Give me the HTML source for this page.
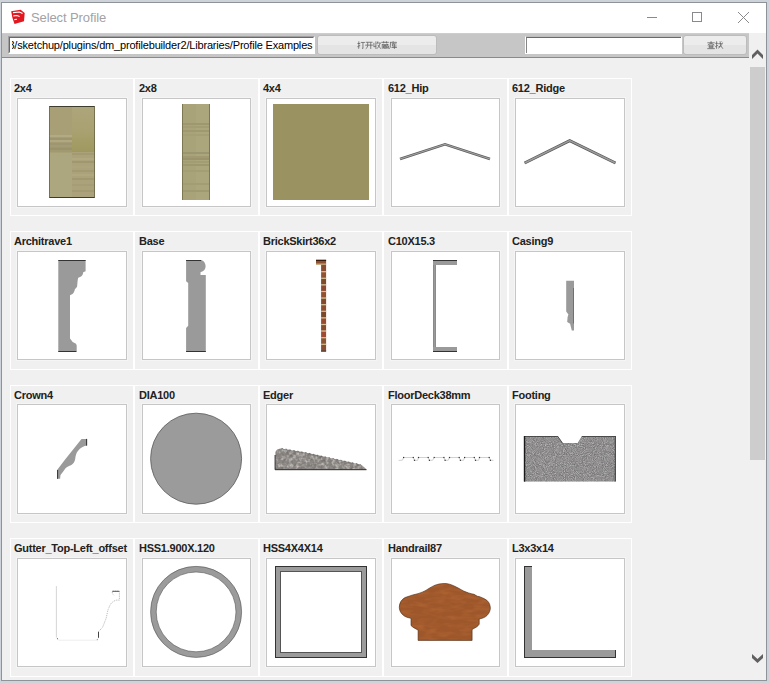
<!DOCTYPE html>
<html><head><meta charset="utf-8">
<style>
*{margin:0;padding:0;box-sizing:border-box}
html,body{width:769px;height:683px;overflow:hidden;background:#cdd3d8;font-family:"Liberation Sans",sans-serif}
.a{position:absolute}
#win{position:absolute;left:1px;top:2px;width:766px;height:679px;background:#f0f0f0;border:1px solid #8e9399}
#title{position:absolute;left:2px;top:3px;width:764px;height:30px;background:#fff}
#ttxt{position:absolute;left:31px;top:9.5px;font-size:13px;color:#a2a2a6;letter-spacing:-0.1px}
#tb{position:absolute;left:2px;top:33px;width:747px;height:25px;background:#c6c6c6;border-bottom:1px solid #8a8a8a;border-top:1px solid #cdcdcd}
#path{position:absolute;left:8px;top:36px;width:307px;height:18px;background:#fff;border-top:1px solid #a0a0a0;border-left:1px solid #a0a0a0;border-right:1px solid #fff;border-bottom:1px solid #fff;overflow:hidden}
#path .in{position:absolute;left:0;top:0;right:0;bottom:0;border-top:1px solid #696969;border-left:1px solid #696969;border-right:1px solid #fff;border-bottom:1px solid #fff}
#path .clip{position:absolute;left:3px;top:1px;width:302px;height:15px;overflow:hidden}
#path span{position:absolute;left:-3.6px;top:1px;font-size:11px;color:#000;letter-spacing:-0.18px;white-space:nowrap}
.btn{position:absolute;height:20px;border:1px solid #bcbcbc;border-radius:3px;background:linear-gradient(#ececec 0,#ececec 50%,#e4e4e4 50%,#e4e4e4 100%)}
#search{position:absolute;left:525px;top:36px;width:157px;height:18px;background:#fff;border-top:1px solid #bfbfbf;border-left:1px solid #fff;border-right:1px solid #fff;border-bottom:1px solid #fff}
#search .in{position:absolute;left:0;top:0;right:0;bottom:0;border-top:1px solid #6a6a6a;border-left:1px solid #858585}
#sb{position:absolute;left:749px;top:33px;width:17px;height:647px;background:#f0f0f0}
#thumb{position:absolute;left:750px;top:67px;width:15px;height:393px;background:#cdcdcd}
.card{position:absolute;width:124px;height:138px;border:1px solid #fff;background:#f0f0f0}
.lbl{position:absolute;font-size:11px;font-weight:bold;color:#222;letter-spacing:-0.25px;white-space:nowrap}
.box{position:absolute;width:110px;height:109px;background:#fff;border:1px solid #c6c6c6;box-shadow:0 0 0 1px #f5f5f5}
.box svg{position:absolute;left:-1px;top:-1px}
</style></head><body>
<div id="win"></div>
<div id="title"></div>
<svg class="a" style="left:10px;top:8px" width="17" height="17" viewBox="10 8 17 17"><path d="M11.2 11.3L20.6 9.8L24.7 13L24 21.3L14.5 23.9L12.4 17.7Z" fill="#e2171f"/><path d="M13 12.6L19.5 12L22.6 13.6M13.4 15.9L17 15.5L19.6 16.4M14.3 19.6L17 19.3" fill="none" stroke="#fff" stroke-width="1.1"/></svg>
<div id="ttxt">Select Profile</div>
<svg class="a" style="left:647px;top:17px" width="10" height="1"><rect x="0" y="0" width="10" height="1" fill="#8a8a8a"/></svg>
<svg class="a" style="left:692px;top:12px" width="10" height="10"><rect x="0.5" y="0.5" width="9" height="9" fill="none" stroke="#8a8a8a" stroke-width="1"/></svg>
<svg class="a" style="left:738px;top:12px" width="11" height="11" shape-rendering="crispEdges"><path d="M0 0L11 11M11 0L0 11" stroke="#8a8a8a" stroke-width="1"/></svg>
<div id="tb"></div>
<div id="path"><div class="in"></div><div class="clip"><span>3/sketchup/plugins/dm_profilebuilder2/Libraries/Profile Examples</span></div></div>
<div class="btn" style="left:317px;top:35px;width:120px"></div>
<svg class="a" style="left:357px;top:41px" width="42" height="10"><path transform="translate(0.0 0) scale(0.9)" d="M0.5 2.8H3.6M2 0.4V8.2L1.2 7.6M0.4 6.4L3.6 4.8M4.2 1.6H8.8M6.6 1.6V8.4L5.6 7.8" fill="none" stroke="#5e5e5e" stroke-width="0.85" /><path transform="translate(8.0 0) scale(0.9)" d="M0.8 1.4H8.4M0.2 4.6H8.8M3 1.4V5Q3 7.6 0.8 8.6M6.4 1.4V8.8" fill="none" stroke="#5e5e5e" stroke-width="0.85" /><path transform="translate(16.0 0) scale(0.9)" d="M1 2V6.6L3.4 5.6M3.2 0.4V8.8M5.4 0.4L4.4 3.2M5 2.2H8.6M8 2.2Q7.2 6.2 4.4 8.6M5.4 4.2Q6.8 7.2 9 8.6" fill="none" stroke="#5e5e5e" stroke-width="0.85" /><path transform="translate(24.0 0) scale(0.9)" d="M0.3 1.5H8.7M3 0.2V2.6M6 0.2V2.6M1.4 3.2V8.6M1.4 4H8.4M2.8 5H6V8H2.8ZM4.4 5V8M2.8 6.5H6M6.8 3L8.6 8.6M8.6 5.2L6.6 8.6" fill="none" stroke="#5e5e5e" stroke-width="0.85" /><path transform="translate(32.0 0) scale(0.9)" d="M4.6 0.2V1.4M1 1.5H8.8M1.6 1.5V5Q1.6 7.6 0.3 8.6M3 3.2H8.4M4.8 2.2L3.6 5.6H8.4M2.8 7.2H8.8M6 3.2V8.8" fill="none" stroke="#5e5e5e" stroke-width="0.85" /></svg>
<div id="search"><div class="in"></div></div>
<div class="btn" style="left:683px;top:35px;width:64px"></div>
<svg class="a" style="left:707px;top:41px" width="18" height="10"><path transform="translate(0.0 0) scale(0.9)" d="M0.4 2H8.6M4.5 0.2V3.6M4.2 2.4L0.8 4.6M4.8 2.4L8.2 4.6M2.4 4.6H6.6V7.4H2.4ZM2.4 6H6.6M0.3 8.5H8.7" fill="none" stroke="#5e5e5e" stroke-width="0.85" /><path transform="translate(8.0 0) scale(0.9)" d="M0.3 2.6H3.2M1.8 0.3V8.2L1 7.6M0.3 6.2L3.2 4.8M3.6 3H8.8M5.6 0.3Q5.8 6.4 8.8 8.6M7.4 3.8L4 8.2M7.4 0.6L8.4 1.6M3.8 6.6L6.2 5.6" fill="none" stroke="#5e5e5e" stroke-width="0.85" /></svg>
<div id="sb"></div>
<div id="thumb"></div>
<svg class="a" style="left:0;top:0" width="769" height="683"><path d="M752 55L757.5 49.6L763 55L763 59L757.5 53.6L752 59Z" fill="#606060"/><path d="M752 654L757.5 659L763 654L763 658L757.5 663L752 658Z" fill="#606060"/></svg>

<div class="card" style="left:10px;top:78px;width:124px;height:138px"></div>
<div class="lbl" style="left:14px;top:82px">2x4</div>
<div class="box" style="left:17px;top:98px;width:110px;height:109px"></div>
<div class="card" style="left:134px;top:78px;width:125px;height:138px"></div>
<div class="lbl" style="left:139px;top:82px">2x8</div>
<div class="box" style="left:142px;top:98px;width:109px;height:109px"></div>
<div class="card" style="left:259px;top:78px;width:124px;height:138px"></div>
<div class="lbl" style="left:263px;top:82px">4x4</div>
<div class="box" style="left:266px;top:98px;width:110px;height:109px"></div>
<div class="card" style="left:383px;top:78px;width:125px;height:138px"></div>
<div class="lbl" style="left:388px;top:82px">612_Hip</div>
<div class="box" style="left:391px;top:98px;width:109px;height:109px"></div>
<div class="card" style="left:508px;top:78px;width:124px;height:138px"></div>
<div class="lbl" style="left:512px;top:82px">612_Ridge</div>
<div class="box" style="left:515px;top:98px;width:110px;height:109px"></div>
<div class="card" style="left:10px;top:231px;width:124px;height:139px"></div>
<div class="lbl" style="left:14px;top:235px">Architrave1</div>
<div class="box" style="left:17px;top:251px;width:110px;height:109px"></div>
<div class="card" style="left:134px;top:231px;width:125px;height:139px"></div>
<div class="lbl" style="left:139px;top:235px">Base</div>
<div class="box" style="left:142px;top:251px;width:109px;height:109px"></div>
<div class="card" style="left:259px;top:231px;width:124px;height:139px"></div>
<div class="lbl" style="left:263px;top:235px">BrickSkirt36x2</div>
<div class="box" style="left:266px;top:251px;width:110px;height:109px"></div>
<div class="card" style="left:383px;top:231px;width:125px;height:139px"></div>
<div class="lbl" style="left:388px;top:235px">C10X15.3</div>
<div class="box" style="left:391px;top:251px;width:109px;height:109px"></div>
<div class="card" style="left:508px;top:231px;width:124px;height:139px"></div>
<div class="lbl" style="left:512px;top:235px">Casing9</div>
<div class="box" style="left:515px;top:251px;width:110px;height:109px"></div>
<div class="card" style="left:10px;top:385px;width:124px;height:138px"></div>
<div class="lbl" style="left:14px;top:389px">Crown4</div>
<div class="box" style="left:17px;top:404px;width:110px;height:110px"></div>
<div class="card" style="left:134px;top:385px;width:125px;height:138px"></div>
<div class="lbl" style="left:139px;top:389px">DIA100</div>
<div class="box" style="left:142px;top:404px;width:109px;height:110px"></div>
<div class="card" style="left:259px;top:385px;width:124px;height:138px"></div>
<div class="lbl" style="left:263px;top:389px">Edger</div>
<div class="box" style="left:266px;top:404px;width:110px;height:110px"></div>
<div class="card" style="left:383px;top:385px;width:125px;height:138px"></div>
<div class="lbl" style="left:388px;top:389px">FloorDeck38mm</div>
<div class="box" style="left:391px;top:404px;width:109px;height:110px"></div>
<div class="card" style="left:508px;top:385px;width:124px;height:138px"></div>
<div class="lbl" style="left:512px;top:389px">Footing</div>
<div class="box" style="left:515px;top:404px;width:110px;height:110px"></div>
<div class="card" style="left:10px;top:538px;width:124px;height:139px"></div>
<div class="lbl" style="left:14px;top:542px">Gutter_Top-Left_offset</div>
<div class="box" style="left:17px;top:558px;width:110px;height:109px"></div>
<div class="card" style="left:134px;top:538px;width:125px;height:139px"></div>
<div class="lbl" style="left:139px;top:542px">HSS1.900X.120</div>
<div class="box" style="left:142px;top:558px;width:109px;height:109px"></div>
<div class="card" style="left:259px;top:538px;width:124px;height:139px"></div>
<div class="lbl" style="left:263px;top:542px">HSS4X4X14</div>
<div class="box" style="left:266px;top:558px;width:110px;height:109px"></div>
<div class="card" style="left:383px;top:538px;width:125px;height:139px"></div>
<div class="lbl" style="left:388px;top:542px">Handrail87</div>
<div class="box" style="left:391px;top:558px;width:109px;height:109px"></div>
<div class="card" style="left:508px;top:538px;width:124px;height:139px"></div>
<div class="lbl" style="left:512px;top:542px">L3x3x14</div>
<div class="box" style="left:515px;top:558px;width:110px;height:109px"></div>
<svg class="a" style="left:0;top:0" width="769" height="683" viewBox="0 0 769 683"><defs><linearGradient id="g24tr" x1="0" y1="0" x2="0" y2="1"><stop offset="0" stop-color="#aea67c"/><stop offset="0.55" stop-color="#a9a170"/><stop offset="1" stop-color="#9f985e"/></linearGradient></defs><rect x="49" y="106" width="23" height="46" fill="#a89f77"/><rect x="72" y="106" width="23" height="46" fill="url(#g24tr)"/><rect x="49" y="152" width="23" height="46" fill="#aca77f"/><rect x="72" y="152" width="23" height="46" fill="#aba17a"/><rect x="49" y="135" width="23" height="2.5" fill="#b2aa82"/><rect x="49" y="137.5" width="23" height="2.5" fill="#9d9570"/><rect x="49" y="140" width="23" height="2.5" fill="#b0a880"/><rect x="49" y="142.5" width="23" height="2.5" fill="#9e9671"/><rect x="49" y="145" width="23" height="2.5" fill="#a39b74"/><rect x="49" y="147.5" width="23" height="2.5" fill="#9a926c"/><rect x="49" y="150" width="23" height="2.5" fill="#a1996f"/><rect x="72" y="153" width="23" height="2" fill="#a39a72"/><rect x="72" y="158" width="23" height="2" fill="#b1a880"/><rect x="72" y="161" width="23" height="2" fill="#a0976f"/><rect x="72" y="166" width="23" height="2" fill="#ada47c"/><rect x="72" y="170" width="23" height="2" fill="#a39a72"/><rect x="72" y="174" width="23" height="2" fill="#b0a77f"/><rect x="72" y="178" width="23" height="2" fill="#a1986f"/><rect x="72" y="184" width="23" height="2" fill="#a69d75"/><rect x="72" y="190" width="23" height="2" fill="#a39a72"/><rect x="49" y="106" width="46" height="1" fill="#3e3c2c"/><rect x="49" y="197" width="46" height="1" fill="#3e3c2c"/><rect x="49" y="106" width="0.8" height="92" fill="#6a6548"/><rect x="94.2" y="106" width="0.8" height="92" fill="#6a6548"/><rect x="182" y="104" width="28" height="96" fill="#aca67c"/><rect x="182" y="104" width="14" height="96" fill="#a9a37a"/><rect x="182" y="123" width="28" height="2" fill="#9e976f"/><rect x="182" y="126" width="28" height="2" fill="#a39d74"/><rect x="182" y="130" width="28" height="2" fill="#9f9870"/><rect x="182" y="134" width="28" height="2" fill="#a59f76"/><rect x="182" y="152" width="28" height="2" fill="#9c9570"/><rect x="182" y="156" width="28" height="2" fill="#a09a72"/><rect x="182" y="158" width="28" height="2" fill="#9a936c"/><rect x="182" y="161" width="28" height="2" fill="#a39d74"/><rect x="182" y="164" width="28" height="2" fill="#9e986f"/><rect x="182" y="170" width="28" height="2" fill="#a49e75"/><rect x="182" y="183" width="28" height="2" fill="#a39d74"/><rect x="182" y="190" width="28" height="2" fill="#a09a72"/><rect x="182" y="104" width="1" height="96" fill="#7d7852"/><rect x="209" y="104" width="1" height="96" fill="#7d7852"/><rect x="273" y="104" width="96" height="96" fill="#9b9262"/><polyline points="400,159 445,144.3 490,159" fill="none" stroke="#5e5e5e" stroke-width="2.7"/><polyline points="400,159 445,144.3 490,159" fill="none" stroke="#a4a4a4" stroke-width="1.1"/><polyline points="524.6,163 569.7,140.6 615.5,163" fill="none" stroke="#555" stroke-width="3"/><polyline points="524.6,163 569.7,140.6 615.5,163" fill="none" stroke="#9c9c9c" stroke-width="1.6"/><path d="M58.3 260 H85.6 V271.2 L83.2 272.3 C83 274.5 82 277 78.2 277.7 C77.5 280 77.4 284 77.1 286.6 C76.5 288 75 289 74.8 289.5 C74.5 291 74 292.5 72.5 294 L70 295.3 V338.6 L72.7 341.9 L76 343.7 L76.7 345.6 V352 H58.3 Z" fill="#9a9a9a"/><rect x="58.3" y="260" width="27.3" height="1" fill="#333"/><rect x="58.3" y="351" width="18" height="1" fill="#333"/><path d="M186.1 260 H201 C203.5 260.5 205.6 263 205.6 266.3 C205.6 269 204 271.3 200.5 272.2 V275 H205.8 V352 H186.1 V328 L188.2 325.8 V283 L186.1 281.2 Z" fill="#9a9a9a"/><rect x="186.1" y="260" width="15" height="1" fill="#333"/><rect x="186.1" y="351" width="19.7" height="1" fill="#333"/><rect x="316" y="259.8" width="10.1" height="5" fill="#8e5030"/><rect x="316" y="263.6" width="10.1" height="1.2" fill="#d4c193"/><rect x="316" y="259.8" width="10.1" height="1.2" fill="#3a1a0a"/><rect x="321.1" y="264.8" width="5" height="6.6" fill="#8a4c2e"/><rect x="321.1" y="271.4" width="5" height="6.6" fill="#925232"/><rect x="321.1" y="278.0" width="5" height="6.6" fill="#7e4a2c"/><rect x="321.1" y="284.6" width="5" height="6.6" fill="#8c4a30"/><rect x="321.1" y="291.2" width="5" height="6.6" fill="#96502e"/><rect x="321.1" y="297.8" width="5" height="6.6" fill="#84482c"/><rect x="321.1" y="304.4" width="5" height="6.6" fill="#8e4e30"/><rect x="321.1" y="311.0" width="5" height="6.6" fill="#7c482a"/><rect x="321.1" y="317.6" width="5" height="6.6" fill="#9a4a2e"/><rect x="321.1" y="324.2" width="5" height="6.6" fill="#884c2e"/><rect x="321.1" y="330.8" width="5" height="6.6" fill="#a04a30"/><rect x="321.1" y="337.4" width="5" height="6.6" fill="#8c5634"/><rect x="321.1" y="344.0" width="5" height="6.6" fill="#8a4e30"/><rect x="321.1" y="350.6" width="5" height="0.9" fill="#8e5030"/><rect x="321.1" y="271.1" width="5" height="1.2" fill="#d4c193"/><rect x="321.1" y="277.7" width="5" height="1.2" fill="#d4c193"/><rect x="321.1" y="284.3" width="5" height="1.2" fill="#d4c193"/><rect x="321.1" y="290.9" width="5" height="1.2" fill="#d4c193"/><rect x="321.1" y="297.5" width="5" height="1.2" fill="#d4c193"/><rect x="321.1" y="304.1" width="5" height="1.2" fill="#d4c193"/><rect x="321.1" y="310.7" width="5" height="1.2" fill="#d4c193"/><rect x="321.1" y="317.3" width="5" height="1.2" fill="#d4c193"/><rect x="321.1" y="323.9" width="5" height="1.2" fill="#d4c193"/><rect x="321.1" y="330.5" width="5" height="1.2" fill="#d4c193"/><rect x="321.1" y="337.1" width="5" height="1.2" fill="#d4c193"/><rect x="321.1" y="343.7" width="5" height="1.2" fill="#d4c193"/><rect x="321.1" y="350.5" width="5" height="1" fill="#2a1a10"/><rect x="433" y="261" width="3" height="90" fill="#9a9a9a"/><rect x="433" y="261" width="24" height="4" fill="#9a9a9a"/><rect x="433" y="347" width="24" height="4" fill="#9a9a9a"/><rect x="433" y="260" width="24" height="1" fill="#333"/><rect x="433" y="351" width="24" height="1" fill="#333"/><rect x="433" y="265" width="1" height="82" fill="#8a8a8a"/><rect x="435" y="265" width="1" height="82" fill="#8c8c8c"/><path d="M566.2 280.8 L574 280.8 L574 330.5 L571.8 330.5 L570.1 323.8 L567.2 322.1 L567.6 317 L568.4 314.5 L566.2 311.6 Z" fill="#9a9a9a"/><rect x="573" y="288" width="0.8" height="35.5" fill="#666"/><path d="M81.5 438.9 L87.1 438.9 L87.1 445.6 C84 446 80 448 78.1 450.7 C76 453 75.6 456 75.2 459 C74.8 462 73 464 71.4 465 C68 466 65.5 468.3 65.5 468.3 L63 471.7 L60.5 475.1 L60.1 478.8 L57.1 478.8 L57.1 470 L65.5 459.1 Z" fill="#9a9a9a"/><rect x="86.1" y="438.9" width="1" height="6.7" fill="#333"/><rect x="57.1" y="470" width="1" height="8.8" fill="#333"/><circle cx="196.1" cy="458.7" r="45.5" fill="#9b9b9b" stroke="#5a5a5a" stroke-width="0.8"/><defs><filter id="nz1" x="0" y="0" width="100%" height="100%" color-interpolation-filters="sRGB"><feTurbulence type="fractalNoise" baseFrequency="0.28" numOctaves="2" seed="7"/><feColorMatrix type="matrix" values="0 0 0 0 0.86  0 0 0 0 0.84  0 0 0 0 0.82  2.0 0 0 0 -0.85"/><feComposite in2="SourceAlpha" operator="in"/></filter><filter id="nz1b" x="0" y="0" width="100%" height="100%" color-interpolation-filters="sRGB"><feTurbulence type="fractalNoise" baseFrequency="0.3" numOctaves="2" seed="21"/><feColorMatrix type="matrix" values="0 0 0 0 0.4  0 0 0 0 0.38  0 0 0 0 0.37  1.6 0 0 0 -0.7"/><feComposite in2="SourceAlpha" operator="in"/></filter></defs><path d="M275.1 469.7 L275.6 451.5 C276.5 449.3 279 448.4 281.5 448.4 L305.1 452.5 L360.6 464.6 C363 466 365 468 366.5 469.7 Z" fill="#8a8683"/><path d="M275.1 469.7 L275.6 451.5 C276.5 449.3 279 448.4 281.5 448.4 L305.1 452.5 L360.6 464.6 C363 466 365 468 366.5 469.7 Z" fill="#fff" filter="url(#nz1)"/><path d="M275.1 469.7 L275.6 451.5 C276.5 449.3 279 448.4 281.5 448.4 L305.1 452.5 L360.6 464.6 C363 466 365 468 366.5 469.7 Z" fill="#000" filter="url(#nz1b)"/><path d="M275.1 455 L275.1 469.7 L366.5 469.7" fill="none" stroke="#2a2a2a" stroke-width="1"/><path d="M281.5 448.4 L305.1 452.5 L360.6 464.6" fill="none" stroke="#444" stroke-width="0.6" stroke-dasharray="1.5 2.5"/><path d="M398.6 460.4 L402.4 460.2 L403.6 457.5 L413.3 457.5 L414.5 460.3 L417.6 460.3 L418.5 457.5 L428.2 457.5 L429.4 460.3 L432.5 460.3 L434.2 457.5 L443.9 457.5 L445.1 460.3 L448.2 460.3 L449.5 457.5 L459.2 457.5 L460.4 460.3 L463.5 460.3 L464.6 457.5 L474.3 457.5 L475.5 460.3 L478.6 460.3 L479.5 457.5 L489.2 457.5 L490.4 460.3 L493.5 460.3" fill="none" stroke="#bdbdbd" stroke-width="0.7"/><rect x="403.0" y="456.9" width="1.2" height="1.2" fill="#333"/><rect x="412.7" y="456.9" width="1.2" height="1.2" fill="#333"/><rect x="413.9" y="459.7" width="1.2" height="1.2" fill="#333"/><rect x="417.9" y="456.9" width="1.2" height="1.2" fill="#333"/><rect x="427.6" y="456.9" width="1.2" height="1.2" fill="#333"/><rect x="428.8" y="459.7" width="1.2" height="1.2" fill="#333"/><rect x="433.6" y="456.9" width="1.2" height="1.2" fill="#333"/><rect x="443.3" y="456.9" width="1.2" height="1.2" fill="#333"/><rect x="444.5" y="459.7" width="1.2" height="1.2" fill="#333"/><rect x="448.9" y="456.9" width="1.2" height="1.2" fill="#333"/><rect x="458.6" y="456.9" width="1.2" height="1.2" fill="#333"/><rect x="459.8" y="459.7" width="1.2" height="1.2" fill="#333"/><rect x="464.0" y="456.9" width="1.2" height="1.2" fill="#333"/><rect x="473.7" y="456.9" width="1.2" height="1.2" fill="#333"/><rect x="474.9" y="459.7" width="1.2" height="1.2" fill="#333"/><rect x="478.9" y="456.9" width="1.2" height="1.2" fill="#333"/><rect x="488.6" y="456.9" width="1.2" height="1.2" fill="#333"/><rect x="489.8" y="459.7" width="1.2" height="1.2" fill="#333"/><defs><filter id="nz2" x="0" y="0" width="100%" height="100%" color-interpolation-filters="sRGB"><feTurbulence type="fractalNoise" baseFrequency="1.1" numOctaves="1" seed="11"/><feColorMatrix type="matrix" values="0 0 0 0 0.82  0 0 0 0 0.81  0 0 0 0 0.82  1.6 0 0 0 -0.62"/><feComposite in2="SourceAlpha" operator="in"/></filter><filter id="nz2b" x="0" y="0" width="100%" height="100%" color-interpolation-filters="sRGB"><feTurbulence type="fractalNoise" baseFrequency="1.1" numOctaves="1" seed="5"/><feColorMatrix type="matrix" values="0 0 0 0 0.35  0 0 0 0 0.35  0 0 0 0 0.36  1.6 0 0 0 -0.66"/><feComposite in2="SourceAlpha" operator="in"/></filter></defs><path d="M524.1 436 L557.8 436 L562.5 443.1 L577.7 443.1 L581.9 436 L615.5 436 L615.5 481.5 L524.1 481.5 Z" fill="#8f8d8d"/><path d="M524.1 436 L557.8 436 L562.5 443.1 L577.7 443.1 L581.9 436 L615.5 436 L615.5 481.5 L524.1 481.5 Z" fill="#fff" filter="url(#nz2)"/><path d="M524.1 436 L557.8 436 L562.5 443.1 L577.7 443.1 L581.9 436 L615.5 436 L615.5 481.5 L524.1 481.5 Z" fill="#000" filter="url(#nz2b)"/><path d="M524.6 481.5 L524.6 436.5 L557.8 436.5 L562.5 443.1 M581.9 436.5 L615.5 436.5" fill="none" stroke="#3a3a3a" stroke-width="0.8"/><rect x="523.8" y="436" width="1.4" height="45.5" fill="#1a1a1a"/><rect x="614.8" y="436" width="1" height="45.5" fill="#333"/><path d="M56.4 586.1 L56.4 637.5" fill="none" stroke="#c4c4c4" stroke-width="0.7"/><path d="M56.4 637.5 L58.6 640.2 L96.5 640.2 L98.5 638" fill="none" stroke="#e6e6e6" stroke-width="0.7"/><path d="M98.5 631.6 L102.5 627.4 C104 624 105 621 105.9 619 C107 615 107.5 611 108.4 608.9 C110 605 111 603 112.6 602.1 C114 601 115.5 600.1 116.9 600.1 L119.4 600.1 L119.4 591.2 L112.3 591.2 L112.3 593.7 L114.3 595.4" fill="none" stroke="#8a8a8a" stroke-width="0.6" stroke-dasharray="1.2 1"/><rect x="112.3" y="590.8" width="7" height="1" fill="#555"/><rect x="98" y="631.8" width="1" height="6" fill="#444"/><rect x="57" y="638.2" width="1" height="1" fill="#666"/><rect x="96.8" y="639.2" width="1" height="1" fill="#888"/><circle cx="196.1" cy="611.9" r="42.7" fill="none" stroke="#9b9b9b" stroke-width="5.7"/><circle cx="196.1" cy="611.9" r="45.5" fill="none" stroke="#555" stroke-width="0.6"/><circle cx="196.1" cy="611.9" r="39.9" fill="none" stroke="#555" stroke-width="0.6"/><rect x="275" y="566" width="92" height="92" fill="#333"/><rect x="276" y="567" width="90" height="90" fill="#9b9b9b"/><rect x="280" y="571" width="82" height="82" fill="#555"/><rect x="281" y="572" width="80" height="80" fill="#fff"/><defs><filter id="nz3" x="0" y="0" width="100%" height="100%" color-interpolation-filters="sRGB"><feTurbulence type="fractalNoise" baseFrequency="0.08 0.25" numOctaves="2" seed="4"/><feColorMatrix type="matrix" values="0 0 0 0 0.76  0 0 0 0 0.44  0 0 0 0 0.24  0.9 0 0 0 -0.32"/><feComposite in2="SourceAlpha" operator="in"/></filter></defs><path d="M418.1 640.4 L472.1 640.4 L472.1 629.4 C475 628 478 626.5 479.2 624.2 L479.2 619 C482 618.5 485 617.5 487 615.5 C489.5 613 490.5 610 490.3 607.3 C490 603.5 488 600.5 484.4 598.8 C482 597.5 479.5 596.5 477.3 596.2 L474 594.3 C470 593.5 467 592.5 463.6 591 C457 587.5 451 583.5 444.8 583.5 C440 583.5 437 584.5 435 585.2 C431 587 428 589 425.9 590.4 C421 593 417 594 412.9 594.9 L405.1 597.5 C401.5 599.5 399.3 603 399.3 607.3 C399.3 612 403 616.5 408.4 617.7 L411 618.3 L411 625.5 C413 627.5 416 629 418.1 630 Z" fill="#9d572a"/><path d="M418.1 640.4 L472.1 640.4 L472.1 629.4 C475 628 478 626.5 479.2 624.2 L479.2 619 C482 618.5 485 617.5 487 615.5 C489.5 613 490.5 610 490.3 607.3 C490 603.5 488 600.5 484.4 598.8 C482 597.5 479.5 596.5 477.3 596.2 L474 594.3 C470 593.5 467 592.5 463.6 591 C457 587.5 451 583.5 444.8 583.5 C440 583.5 437 584.5 435 585.2 C431 587 428 589 425.9 590.4 C421 593 417 594 412.9 594.9 L405.1 597.5 C401.5 599.5 399.3 603 399.3 607.3 C399.3 612 403 616.5 408.4 617.7 L411 618.3 L411 625.5 C413 627.5 416 629 418.1 630 Z" fill="#fff" filter="url(#nz3)"/><path d="M418.1 640.4 L472.1 640.4 L472.1 629.4 C475 628 478 626.5 479.2 624.2 L479.2 619 C482 618.5 485 617.5 487 615.5 C489.5 613 490.5 610 490.3 607.3 C490 603.5 488 600.5 484.4 598.8 C482 597.5 479.5 596.5 477.3 596.2 L474 594.3 C470 593.5 467 592.5 463.6 591 C457 587.5 451 583.5 444.8 583.5 C440 583.5 437 584.5 435 585.2 C431 587 428 589 425.9 590.4 C421 593 417 594 412.9 594.9 L405.1 597.5 C401.5 599.5 399.3 603 399.3 607.3 C399.3 612 403 616.5 408.4 617.7 L411 618.3 L411 625.5 C413 627.5 416 629 418.1 630 Z" fill="none" stroke="#4a2810" stroke-width="0.6"/><rect x="525" y="567" width="7" height="90" fill="#9a9a9a"/><rect x="525" y="650" width="90" height="7" fill="#9a9a9a"/><rect x="524" y="566" width="8" height="1" fill="#333"/><rect x="524" y="566" width="1" height="92" fill="#333"/><rect x="524" y="657" width="92" height="1" fill="#333"/><rect x="615" y="650" width="1" height="8" fill="#333"/></svg>
</body></html>
